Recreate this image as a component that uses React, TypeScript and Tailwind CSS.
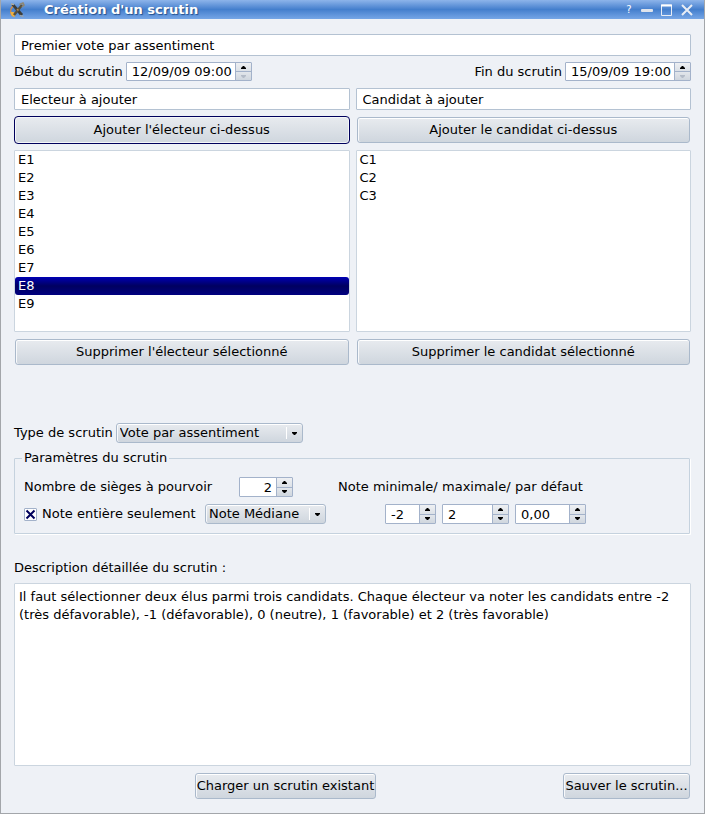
import { useState, type ReactNode } from "react"

const voters = ["E1", "E2", "E3", "E4", "E5", "E6", "E7", "E8", "E9"]
const candidates = ["C1", "C2", "C3"]

const buttonFace =
  "rounded-[3px] border border-[#aab9cb] bg-linear-to-b from-[#e8ebef] to-[#cfd6de] shadow-[inset_0_1px_0_#fff,inset_1px_0_0_#f8f9fb]"
const fieldBox = "rounded-[1px] border border-[#b4c2d2] bg-white"

function PushButton({ children, className = "" }: { children: ReactNode; className?: string }) {
  return (
    <button type="button" className={`h-[26px] whitespace-nowrap ${buttonFace} ${className}`}>
      {children}
    </button>
  )
}

type SpinBoxProps = {
  id: string
  value: string
  label?: string
  className: string
  inputClass?: string
  atMin?: boolean
}

function SpinBox({ id, value, label, className, inputClass = "pl-[5px]", atMin = false }: SpinBoxProps) {
  return (
    <div className={`flex rounded-[1px] border border-[#a3b2ca] bg-white ${className}`}>
      <input
        id={id}
        aria-label={label}
        defaultValue={value}
        className={`min-w-0 flex-1 bg-transparent pt-px outline-none ${inputClass}`}
      />
      <div className="flex w-4 shrink-0 flex-col border-l border-[#a3b2ca]">
        <button
          type="button"
          aria-label="Augmenter"
          className="flex flex-1 items-center justify-center border-b border-[#a3b2ca] bg-linear-to-b from-[#eef0f3] to-[#dce1e7]"
        >
          <svg width="7" height="3" viewBox="0 0 7 3">
            <path d="M3 0h1l2 2v1H1V2z" fill="#000" />
          </svg>
        </button>
        <button
          type="button"
          aria-label="Diminuer"
          className="flex flex-1 items-center justify-center bg-linear-to-b from-[#e2e6eb] to-[#cfd6de]"
        >
          <svg width="7" height="3" viewBox="0 0 7 3">
            <path d="M1 0h5v1L4 3H3L1 1z" fill={atMin ? "#b4bcc8" : "#000"} />
          </svg>
        </button>
      </div>
    </div>
  )
}

type ComboProps = {
  id: string
  options: string[]
  label?: string
  className: string
}

function Combo({ id, options, label, className }: ComboProps) {
  return (
    <div className={`relative ${buttonFace} ${className}`}>
      <select id={id} aria-label={label} className="h-full w-full appearance-none bg-transparent pl-[3px] outline-none">
        {options.map((option) => (
          <option key={option}>{option}</option>
        ))}
      </select>
      <div className="pointer-events-none absolute inset-y-[3px] right-0 flex w-4 items-center justify-center border-l border-white">
        <svg width="7" height="3" viewBox="0 0 7 3">
          <path d="M1 0h5v1L4 3H3L1 1z" fill="#000" />
        </svg>
      </div>
    </div>
  )
}

type ListBoxProps = {
  label: string
  items: string[]
  initial?: string
}

function ListBox({ label, items, initial }: ListBoxProps) {
  const [selected, setSelected] = useState(initial)

  return (
    <ul role="listbox" aria-label={label} className="h-[182px] overflow-y-auto rounded-[1px] border border-[#cbd5df] bg-white">
      {items.map((item) => (
        <li
          key={item}
          role="option"
          aria-selected={item === selected}
          onClick={() => setSelected(item)}
          className={`h-[18px] px-[3px] leading-[18px] ${
            item === selected ? "rounded-[3px] bg-linear-to-b from-[#0000b4] via-[#000060] to-[#000080] text-white" : ""
          }`}
        >
          {item}
        </li>
      ))}
    </ul>
  )
}

function TitleBar() {
  return (
    <header className="flex h-[19px] items-center bg-linear-to-b from-[#8db4ea] via-[#447fcd] to-[#76a6e6] pr-[11px] pl-2 text-white">
      <svg width="16" height="16" viewBox="0 0 16 16" className="shrink-0">
        <path d="M4 4C1 7 1 11 4 14" fill="none" stroke="#d98a3a" strokeWidth="1.5" />
        <path d="M1.5 10c0 3 1.500 4.500 4 5l1-3-2-2z" fill="#f0b040" />
        <path d="M2 2.500 5 2l9 10-2 2.500z" fill="#3c3d3a" />
        <path d="m13 3-8 10" stroke="#57503f" strokeWidth="2.500" />
        <path d="M10.500 2.500 14 1l1 2-2 2" fill="none" stroke="#8d8674" strokeWidth="1.500" />
        <path d="m2 2 3 .5" stroke="#b0aca0" strokeWidth="1.500" />
        <path d="m11 13.500 3.500 1" stroke="#9aa3ac" strokeWidth="1.500" />
        <path d="m8 7 1.500 1.500" stroke="#b58b52" strokeWidth="1.500" />
      </svg>
      <h1 className="flex-1 pl-[19px] font-bold [text-shadow:1px_1px_1px_#244f8c]">Création d'un scrutin</h1>
      <div className="flex items-center gap-2">
        <button type="button" aria-label="Aide" className="w-2 text-[10px]">
          ?
        </button>
        <button type="button" aria-label="Réduire">
          <svg width="12" height="12" viewBox="0 0 12 12" className="block">
            <rect y="5" width="12" height="3" rx="1" fill="#dfe4ec" />
          </svg>
        </button>
        <button type="button" aria-label="Agrandir">
          <svg width="12" height="12" viewBox="0 0 12 12" className="block">
            <path d="M.5 1h10v10.500H.5z" fill="none" stroke="#e8edf5" />
            <path d="M0 1.500h11" stroke="#fff" strokeWidth="2" />
          </svg>
        </button>
        <button type="button" aria-label="Fermer">
          <svg width="12" height="12" viewBox="0 0 12 12" className="block">
            <path d="m1 1 10 10M11 1 1 11" stroke="#e8edf5" strokeWidth="2" />
          </svg>
        </button>
      </div>
    </header>
  )
}

export default function App() {
  const [integerOnly, setIntegerOnly] = useState(true)

  return (
    <div className="flex min-h-screen flex-col border border-t-0 border-[#a3a6aa] bg-[#eef1f6] font-['DejaVu_Sans',sans-serif] text-[13px] leading-4 text-black">
      <TitleBar />

      <main className="flex flex-1 flex-col px-[13px] pt-[15px] pb-[14px]">
        <input
          aria-label="Titre du scrutin"
          defaultValue="Premier vote par assentiment"
          className={`h-[22px] w-full px-[6px] outline-none ${fieldBox}`}
        />

        <div className="mt-[6px] flex items-center justify-between">
          <div className="flex items-center gap-[3px]">
            <label htmlFor="start">Début du scrutin</label>
            <SpinBox id="start" value="12/09/09 09:00" className="h-[19px] w-[126px]" atMin />
          </div>
          <div className="flex items-center gap-[3px]">
            <label htmlFor="end">Fin du scrutin</label>
            <SpinBox id="end" value="15/09/09 19:00" className="h-[19px] w-[126px]" atMin />
          </div>
        </div>

        <div className="mt-[7px] grid grid-cols-2 gap-[6px]">
          <section className="flex flex-col gap-[6px]">
            <input
              aria-label="Electeur"
              defaultValue="Electeur à ajouter"
              className={`h-[22px] w-full px-[6px] outline-none ${fieldBox}`}
            />
            <button
              type="button"
              className="h-7 rounded-[4px] border border-[#00005c] bg-linear-to-b from-[#e8ebef] to-[#cfd6de] shadow-[inset_0_0_0_1px_#f4f6f8]"
            >
              Ajouter l'électeur ci-dessus
            </button>
            <ListBox label="Electeurs" items={voters} initial="E8" />
            <PushButton className="mx-px mt-px">Supprimer l'électeur sélectionné</PushButton>
          </section>
          <section className="flex flex-col gap-[6px]">
            <input
              aria-label="Candidat"
              defaultValue="Candidat à ajouter"
              className={`h-[22px] w-full px-[6px] outline-none ${fieldBox}`}
            />
            <PushButton className="mx-px my-px">Ajouter le candidat ci-dessus</PushButton>
            <ListBox label="Candidats" items={candidates} />
            <PushButton className="mx-px mt-px">Supprimer le candidat sélectionné</PushButton>
          </section>
        </div>

        <div className="mt-[58px] flex items-center gap-[3px]">
          <label htmlFor="kind">Type de scrutin</label>
          <Combo id="kind" options={["Vote par assentiment"]} className="h-5 w-[187px]" />
        </div>

        <fieldset className="mt-[7px] mr-px rounded-[1px] border border-[#c5d2de] pb-[9px] pl-[9px] shadow-[1px_1px_0_#fff]">
          <legend className="-ml-[2px] px-[2px]">Paramètres du scrutin</legend>
          <div className="mt-[11px] flex items-center">
            <label htmlFor="seats" className="w-[215px]">
              Nombre de sièges à pourvoir
            </label>
            <SpinBox id="seats" value="2" className="h-5 w-[54px]" inputClass="pr-1 text-right" />
            <span className="ml-[45px] w-[104px] whitespace-nowrap">Note minimale/</span>
            <span className="w-[73px] whitespace-nowrap">maximale/</span>
            <span className="whitespace-nowrap">par défaut</span>
          </div>
          <div className="mt-[7px] flex items-center">
            <label className="flex w-[181px] items-center gap-[5px] whitespace-nowrap">
              <span className="grid size-[13px]">
                <input
                  type="checkbox"
                  checked={integerOnly}
                  onChange={(e) => setIntegerOnly(e.target.checked)}
                  className="col-start-1 row-start-1 size-[13px] appearance-none rounded-[1px] border border-[#a3b2ca] bg-white"
                />
                {integerOnly && (
                  <svg viewBox="0 0 13 13" className="pointer-events-none col-start-1 row-start-1 size-[13px]">
                    <path d="m2.500 2.500 8 8M10.500 2.500l-8 8" stroke="#00005c" strokeWidth="2" />
                  </svg>
                )}
              </span>
              Note entière seulement
            </label>
            <Combo id="mode" label="Mode de calcul" options={["Note Médiane"]} className="h-5 w-[121px]" />
            <div className="ml-[59px] flex gap-[6px]">
              <SpinBox id="min" label="Note minimale" value="-2" className="h-5 w-[51px]" />
              <SpinBox id="max" label="Note maximale" value="2" className="h-5 w-[67px]" />
              <SpinBox id="default" label="Note par défaut" value="0,00" className="h-5 w-[71px]" />
            </div>
          </div>
        </fieldset>

        <label htmlFor="description" className="mt-[26px]">
          Description détaillée du scrutin :
        </label>
        <textarea
          id="description"
          className="mt-[7px] w-full flex-1 resize-none rounded-[1px] border border-[#cbd5df] bg-white px-1 py-1 leading-[18px] outline-none"
          defaultValue="Il faut sélectionner deux élus parmi trois candidats. Chaque électeur va noter les candidats entre -2 (très défavorable), -1 (défavorable), 0 (neutre), 1 (favorable) et 2 (très favorable)"
        />

        <div className="mt-[7px] flex justify-between pr-px pl-[181px]">
          <PushButton className="w-[181px]">Charger un scrutin existant</PushButton>
          <PushButton className="w-[127px]">Sauver le scrutin...</PushButton>
        </div>
      </main>
    </div>
  )
}
